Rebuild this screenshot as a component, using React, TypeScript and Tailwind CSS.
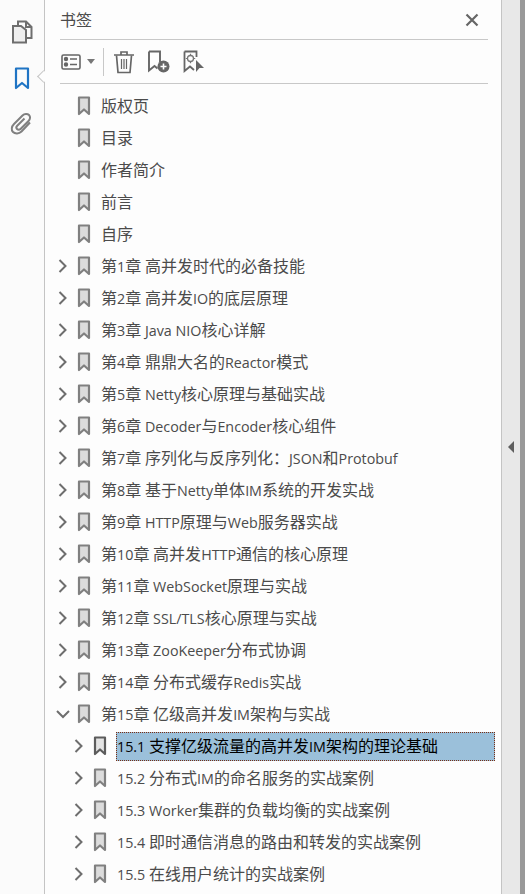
import React from "react";

const rows = [
  { label: "版权页" },
  { label: "目录" },
  { label: "作者简介" },
  { label: "前言" },
  { label: "自序" },
  { label: "第1章 高并发时代的必备技能", arrow: "right" },
  { label: "第2章 高并发IO的底层原理", arrow: "right" },
  { label: "第3章 Java NIO核心详解", arrow: "right" },
  { label: "第4章 鼎鼎大名的Reactor模式", arrow: "right" },
  { label: "第5章 Netty核心原理与基础实战", arrow: "right" },
  { label: "第6章 Decoder与Encoder核心组件", arrow: "right" },
  { label: "第7章 序列化与反序列化：JSON和Protobuf", arrow: "right" },
  { label: "第8章 基于Netty单体IM系统的开发实战", arrow: "right" },
  { label: "第9章 HTTP原理与Web服务器实战", arrow: "right" },
  { label: "第10章 高并发HTTP通信的核心原理", arrow: "right" },
  { label: "第11章 WebSocket原理与实战", arrow: "right" },
  { label: "第12章 SSL/TLS核心原理与实战", arrow: "right" },
  { label: "第13章 ZooKeeper分布式协调", arrow: "right" },
  { label: "第14章 分布式缓存Redis实战", arrow: "right" },
  { label: "第15章 亿级高并发IM架构与实战", arrow: "down" },
  { label: "15.1 支撑亿级流量的高并发IM架构的理论基础", arrow: "right", child: true, selected: true },
  { label: "15.2 分布式IM的命名服务的实战案例", arrow: "right", child: true },
  { label: "15.3 Worker集群的负载均衡的实战案例", arrow: "right", child: true },
  { label: "15.4 即时通信消息的路由和转发的实战案例", arrow: "right", child: true },
  { label: "15.5 在线用户统计的实战案例", arrow: "right", child: true },
];

// latin runs are set smaller than the CJK, like the Windows font fallback in the original
function Label({ text }: { text: string }) {
  const parts = text.split(/([\x20-\x7e]+)/).filter(Boolean);
  return (
    <span className="whitespace-pre">
      {parts.map((p, i) =>
        /^[\x20-\x7e]+$/.test(p) ? (
          <span key={i} className="text-[14.3px]">
            {p}
          </span>
        ) : (
          <span key={i}>{p}</span>
        )
      )}
    </span>
  );
}

function Chevron({ dir }: { dir?: string }) {
  if (!dir) return <span className="w-[14px] shrink-0" />;
  return (
    <svg width="14" height="14" viewBox="0 0 14 14" className="shrink-0" fill="none" stroke="#6e6e6e" strokeWidth="2">
      {dir === "right" ? <path d="M3.5 1 L9.5 7 L3.5 13" /> : <path d="M1 4 L7 10 L13 4" />}
    </svg>
  );
}

function BookmarkIcon({ dark }: { dark?: boolean }) {
  return (
    <svg width="14" height="20" viewBox="0 0 14 20" className="block shrink-0">
      <path d="M2 1.5 H12 V18 L7 13.5 L2 18 Z" fill={dark ? "#e4e4e4" : "#dcdcdc"} stroke={dark ? "#5c5c5c" : "#808080"} strokeWidth="2.2" strokeLinejoin="round" />
    </svg>
  );
}

function Row({ label, arrow, child, selected }: { label: string; arrow?: string; child?: boolean; selected?: boolean }) {
  return (
    <div className={`flex h-8 shrink-0 items-center ${child ? "pl-[27px]" : "pl-[11px]"}`}>
      <Chevron dir={arrow} />
      <span className="ml-[7px]">
        <BookmarkIcon dark={selected} />
      </span>
      <span
        className={
          selected
            ? "ml-[9px] mr-[6px] flex h-[29px] flex-1 items-center border border-dotted border-[#7a2e12] bg-[#9bc0da] text-black"
            : "ml-[10px] text-[#4b4b4b]"
        }
      >
        <Label text={label} />
      </span>
    </div>
  );
}

export default function App() {
  return (
    <div className="flex h-[894px] w-[525px] overflow-hidden bg-[#fdfdfd] font-['Open_Sans','Noto_Sans_CJK_SC',sans-serif] text-[16px] leading-[24px]">
      {/* left rail */}
      <div className="relative flex w-[45px] shrink-0 flex-col items-center border-r border-[#c4c4c4] bg-[#fbfbfb] pt-[20px]">
        <svg width="22" height="24" viewBox="0 0 22 24" fill="none" stroke="#6e6e6e" strokeWidth="2">
          <path d="M7 5 V1.5 H15 L20.5 7 V18 H15" />
          <path d="M15 1.5 V7 H20.5" />
          <path d="M2 6 H10 L15 10 V22.5 H2 Z" fill="#eeeeee" />
        </svg>
        <svg width="16" height="24" viewBox="0 0 16 24" fill="none" stroke="#1f74c4" strokeWidth="2.2" className="mt-[23px]">
          <path d="M2 1.5 H14 V21 L8 16 L2 21 Z" strokeLinejoin="round" />
        </svg>
        <svg width="24" height="24" viewBox="0 0 24 24" fill="none" stroke="#808080" strokeWidth="2" className="mt-[21px]">
          <path d="M20 10.5 L11.5 19.5 C9 22 5 22 3 20 C1 18 1.5 14.5 4 12 L12.5 3.5 C14.5 1.5 17.5 1.5 19 3 C20.5 4.5 20.5 7 18.5 9 L10.5 17 C9.5 18 8 18 7 17 C6 16 6.2 14.8 7.2 13.8 L14.5 6.5" />
        </svg>
        <span className="absolute left-[39px] top-[72px] h-[9px] w-[9px] rotate-45 border-b border-l border-[#c4c4c4] bg-[#fdfdfd]" />
      </div>

      {/* bookmarks panel */}
      <div className="flex min-w-0 flex-1 flex-col">
        <div className="ml-[15px] mr-[13px] flex h-[40px] shrink-0 items-center justify-between border-b border-[#c8c8c8] pr-[9px]">
          <span className="text-[#4b4b4b]">书签</span>
          <svg width="14" height="14" viewBox="0 0 14 14" stroke="#666666" strokeWidth="2.2">
            <path d="M1.5 1.5 L12.5 12.5 M12.5 1.5 L1.5 12.5" />
          </svg>
        </div>
        <div className="ml-[15px] mr-[13px] flex h-[44px] shrink-0 items-center border-b border-[#c8c8c8] pl-[1px]">
          <svg width="20" height="16" viewBox="0 0 20 16" fill="none" stroke="#666666" strokeWidth="1.6">
            <rect x="1" y="1" width="18" height="14" rx="1.5" />
            <path d="M9 5 H16 M9 10.5 H16" />
            <circle cx="5" cy="5" r="1.4" fill="#666666" />
            <circle cx="5" cy="10.5" r="1.4" fill="#666666" />
          </svg>
          <svg width="8" height="5" viewBox="0 0 8 5" className="ml-[6px]">
            <path d="M0 0 H8 L4 5 Z" fill="#777777" />
          </svg>
          <span className="ml-[8px] h-[28px] w-px bg-[#c8c8c8]" />
          <svg width="22" height="24" viewBox="0 0 22 24" fill="none" stroke="#666666" strokeWidth="1.7" className="ml-[9px]">
            <path d="M1 5 H21 M8 5 V2 H14 V5" />
            <path d="M3.5 5.5 L5 22.5 H17 L18.5 5.5" />
            <path d="M8.5 9 V19 M11 9 V19 M13.5 9 V19" strokeWidth="1.2" />
          </svg>
          <svg width="23" height="23" viewBox="0 0 23 23" fill="none" className="ml-[12px]">
            <path d="M2 1.5 H13 V12 M2 1.5 V20.5 L7.5 16 L10.5 18.5" stroke="#666666" strokeWidth="1.9" />
            <circle cx="16.5" cy="16.5" r="6" fill="#666666" />
            <path d="M13.5 16.5 H19.5 M16.5 13.5 V19.5" stroke="#ffffff" strokeWidth="1.6" />
          </svg>
          <svg width="22" height="23" viewBox="0 0 22 23" fill="none" className="ml-[13px]">
            <path d="M1.5 1.5 H13.5 V7 M1.5 1.5 V21 L7 16.5 L11 20" stroke="#666666" strokeWidth="1.8" />
            <circle cx="7.5" cy="8.5" r="3" stroke="#777777" strokeWidth="1.3" />
            <path d="M7.5 3.8 V5 M7.5 12 V13.2 M2.8 8.5 H4 M11 8.5 H12.2" stroke="#777777" strokeWidth="1.2" />
            <path d="M13 10 L21 18 H16.5 L13 22 Z" fill="#666666" />
          </svg>
        </div>
        <div className="flex min-h-0 flex-1 flex-col overflow-hidden pt-[6px]">
          {rows.map((r) => (
            <Row key={r.label} {...r} />
          ))}
        </div>
      </div>

      {/* collapsed side strip */}
      <div className="flex w-[19px] shrink-0 items-center justify-center border-l border-[#c4c4c4] bg-[#e8e8e8]">
        <svg width="6" height="12" viewBox="0 0 6 12">
          <path d="M6 0 V12 L0 6 Z" fill="#5e5e5e" />
        </svg>
      </div>
      <div className="w-[5px] shrink-0 bg-[#999999]" />
    </div>
  );
}
